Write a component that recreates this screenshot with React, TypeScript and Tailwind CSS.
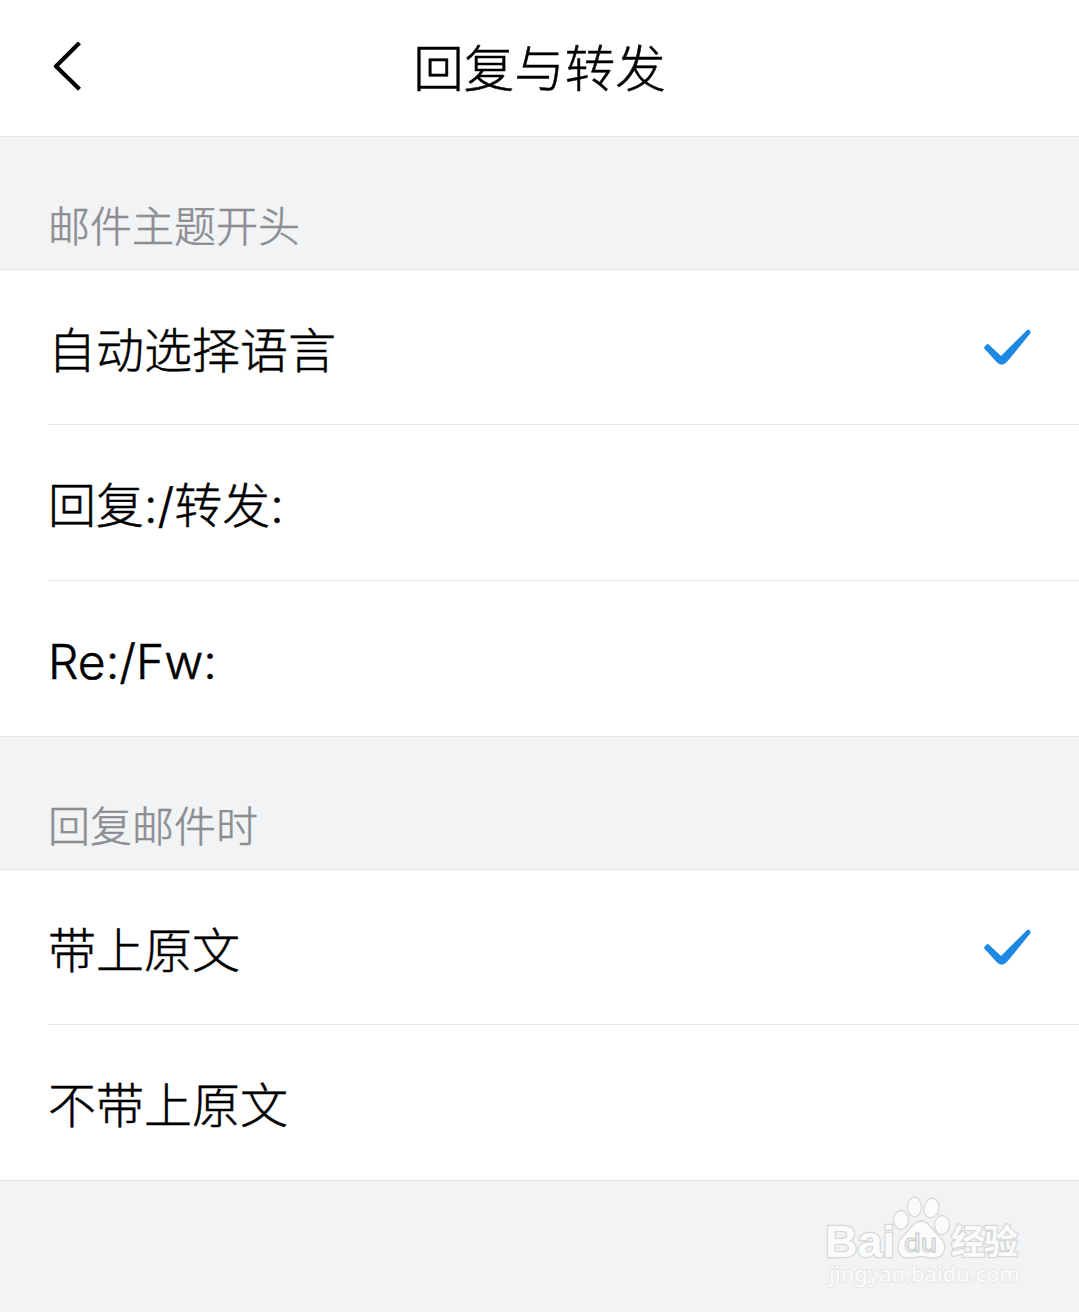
type Option = { label: string; checked?: boolean };

type SectionProps = {
  title: string;
  options: Option[];
};

const SUBJECT_OPTIONS: Option[] = [
  { label: '自动选择语言', checked: true },
  { label: '回复:/转发:' },
  { label: 'Re:/Fw:' },
];

const REPLY_OPTIONS: Option[] = [
  { label: '带上原文', checked: true },
  { label: '不带上原文' },
];

function BackIcon() {
  return (
    <svg width="30" height="52" viewBox="0 0 30 52" fill="none" stroke="#000" strokeWidth="4.2">
      <path d="M28.5 0.8 L5 24.300 L28.5 47.3" strokeLinejoin="round" />
    </svg>
  );
}

function CheckIcon() {
  return (
    <svg width="48" height="38" viewBox="0 0 48 38" fill="#1e88e5">
      <path d="M1.5 18.7 L3.3 16.7 Q4.7 15.5 6.1 16.7 L18 28 L43.9 2.2 Q45.3 1 46.5 2.2 L47.2 3 Q48 4.200 47.2 5.6 L24.3 33.5 Q18.8 39.5 13.6 34 L1.700 20.9 Q0.7 19.7 1.5 18.7 Z" />
    </svg>
  );
}

function Section({ title, options }: SectionProps) {
  return (
    <section>
      <h2 className="h-[132px] pt-[58px] pl-12 text-[42px] leading-[64px] text-[#8b8d91] [-webkit-text-stroke:0.5px_#8b8d91]">
        {title}
      </h2>
      <ul className="border-y border-[#e3e4e6] bg-white pl-12">
        {options.map((option) => (
          <li
            key={option.label}
            className="flex h-[156px] items-center justify-between border-b border-[#e5e6e8] pr-12 text-[48px] first:h-[155px] last:h-[155px] last:border-b-0"
          >
            <span className="pt-[7px] leading-[70px] [-webkit-text-stroke:0.5px_#000]">{option.label}</span>
            {option.checked && <CheckIcon />}
          </li>
        ))}
      </ul>
    </section>
  );
}

function Watermark() {
  return (
    <svg
      className="absolute right-[49px] bottom-[12px]"
      width="210"
      height="110"
      viewBox="820 1190 210 110"
      fill="#fafbfb"
      stroke="#d6d8da"
      strokeWidth="1.3"
    >
      <text
        x="829"
        y="1282"
        fontSize="22"
        fontWeight="500"
        strokeWidth="1.6"
        stroke="#e2e4e6"
        paintOrder="stroke"
        fontFamily="'Noto Sans', sans-serif"
        textLength="191"
        lengthAdjust="spacingAndGlyphs"
      >
        jingyan.baidu.com
      </text>
      <g paintOrder="stroke" strokeWidth="2.6">
        <text
          x="825"
          y="1257"
          fontSize="45"
          fontWeight="700"
          fontFamily="'Liberation Sans', sans-serif"
          textLength="70"
          lengthAdjust="spacingAndGlyphs"
        >
          Bai
        </text>
        <text
          x="951"
          y="1254"
          fontSize="34"
          fontWeight="700"
          fontFamily="'Noto Sans CJK SC', sans-serif"
          textLength="67"
        >
          经验
        </text>
      </g>
      <ellipse cx="901" cy="1220" rx="7.5" ry="9.5" />
      <ellipse cx="914.5" cy="1207" rx="7" ry="9.8" />
      <ellipse cx="931.5" cy="1208" rx="7.5" ry="9.8" transform="rotate(12 931.5 1208)" />
      <ellipse cx="942" cy="1225" rx="7.5" ry="9.5" />
      <path d="M921 1221 C913 1221 911 1229 904 1235 C895 1242 896 1257 907 1258 C913 1258.5 917 1256.5 921 1256.5 C926 1256.5 929 1258.5 935 1258 C946 1257 948 1244 939 1236 C931 1229 929 1221 921 1221 Z" />
      <text
        x="904"
        y="1252"
        fontSize="25"
        fontWeight="500"
        fontFamily="Inter, sans-serif"
        fill="#eceeef"
        stroke="#cbcdcf"
        strokeWidth="1"
        textLength="33"
        lengthAdjust="spacingAndGlyphs"
      >
        du
      </text>
    </svg>
  );
}

export default function App() {
  return (
    <div className="relative min-h-[1312px] bg-[#f1f3f5] font-[Inter,'Noto_Sans_CJK_SC',sans-serif] font-light text-black">
      <header className="grid h-[137px] grid-cols-[1fr_auto_1fr] items-center border-b border-[#e3e4e6] bg-white">
        <button className="ml-[51px] justify-self-start" aria-label="返回">
          <BackIcon />
        </button>
        <h1 className="pt-px text-[50.5px] leading-[70px] [-webkit-text-stroke:0.5px_#000]">回复与转发</h1>
      </header>
      <Section title="邮件主题开头" options={SUBJECT_OPTIONS} />
      <Section title="回复邮件时" options={REPLY_OPTIONS} />
      <Watermark />
    </div>
  );
}
